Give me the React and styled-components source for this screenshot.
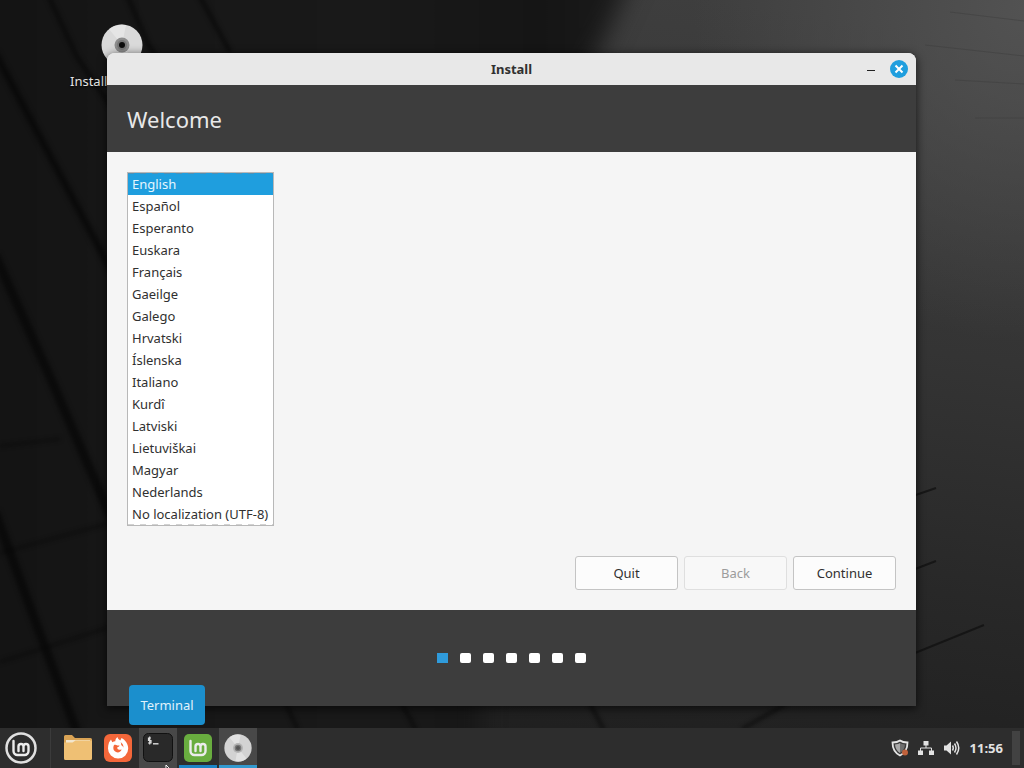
import React from "react";
import styled, { createGlobalStyle, css } from "styled-components";

const accent = "#1f9ede";

const GlobalStyle = createGlobalStyle`
  *, *::before, *::after { box-sizing: border-box; }
  body {
    margin: 0;
    background: #151515;
    font-family: "Noto Sans", "Liberation Sans", sans-serif;
    font-size: 13px;
    line-height: 18px;
    color: #303030;
  }
  button, select { font: inherit; }
`;

const Desktop = styled.div`
  position: relative;
  display: flex;
  flex-direction: column;
  min-height: 100vh;
  overflow: hidden;
`;

const WallpaperArt = styled.svg`
  position: absolute;
  inset: 0;
  width: 100%;
  height: 100%;
`;

const Workspace = styled.main`
  position: relative;
  flex: 1;
  display: flex;
  padding: 53px 108px 22px 107px;
`;

const DesktopIcon = styled.button`
  position: absolute;
  left: 70px;
  top: 24px;
  display: flex;
  flex-direction: column;
  width: 104px;
  gap: 6px;
  padding: 0;
  border: 0;
  background: none;
  color: #e4e4e4;
  text-align: left;
  text-shadow: 0 1px 2px #000;

  svg { align-self: center; }
`;

const Window = styled.section`
  position: relative;
  flex: 1;
  display: flex;
  flex-direction: column;
  border-radius: 8px 8px 0 0;
  overflow: hidden;
  background: #f5f5f5;
  box-shadow: 0 2px 8px 1px rgba(0, 0, 0, 0.6);
`;

const TitleBar = styled.header`
  display: grid;
  grid-template-columns: 1fr auto 1fr;
  align-items: center;
  height: 32px;
  padding: 0 8px;
  background: #e8e8e8;
`;

const WindowTitle = styled.h1`
  grid-column: 2;
  margin: 0;
  font-size: 13px;
  font-weight: 700;
`;

const WindowControls = styled.div`
  justify-self: end;
  display: flex;
  gap: 10px;
`;

const WindowControl = styled.button`
  display: grid;
  place-items: center;
  width: 18px;
  height: 18px;
  padding: 0;
  border: 0;
  border-radius: 50%;
  background: ${(p) => (p.$close ? accent : "transparent")};
  color: ${(p) => (p.$close ? "#fff" : "#222")};
`;

const PageHeader = styled.div`
  display: flex;
  align-items: center;
  height: 67px;
  padding: 0 20px;
  background: #3d3d3d;
  color: #e8e8e8;
`;

const PageTitle = styled.h2`
  margin: 0;
  font-size: 22px;
  line-height: 30px;
  font-weight: 400;
`;

const PageBody = styled.form`
  flex: 1;
  display: flex;
  flex-direction: column;
  justify-content: space-between;
  align-items: flex-start;
  gap: 20px;
  padding: 20px;
`;

const LanguageList = styled.select`
  width: 147px;
  height: 354px;
  padding: 0;
  border: 1px solid #b8b8b8;
  border-radius: 0;
  background: #fff;
  color: #303030;
  overflow: hidden;
  outline: none;
`;

const Language = styled.option`
  height: 22px;
  min-height: 22px;
  padding: 2px 4px 0;

  &:checked {
    background: repeating-linear-gradient(90deg, #4d8fb5 0 6px, ${accent} 6px 12px) top / 100% 1px no-repeat,
      linear-gradient(${accent}, ${accent});
    -webkit-text-fill-color: #e6f7ff;
  }

  &:last-child {
    background: repeating-linear-gradient(90deg, #d2d2d2 0 6px, #fff 6px 12px) bottom / 100% 1px no-repeat;
  }
`;

const Actions = styled.div`
  align-self: flex-end;
  display: flex;
  gap: 6px;
`;

const ActionButton = styled.button`
  width: 103px;
  height: 34px;
  padding: 0;
  border: 1px solid #c4c4c4;
  border-radius: 3px;
  background: #fcfcfc;
  color: #303030;

  &:disabled {
    border-color: #dfdfdf;
    background: #f8f8f8;
    color: #9c9c9c;
  }
`;

const Progress = styled.ol`
  display: flex;
  justify-content: center;
  align-items: center;
  gap: 12px;
  height: 96px;
  margin: 0;
  padding: 0;
  list-style: none;
  background: #3d3d3d;
`;

const Step = styled.li`
  width: 11px;
  height: 10px;
  border-radius: ${(p) => (p.$current ? 0 : 2)}px;
  background: ${(p) => (p.$current ? "#2f9bdb" : "#fff")};
`;

const Panel = styled.footer`
  position: relative;
  display: flex;
  align-items: center;
  height: 40px;
  padding-right: 4px;
  background: #2d2d2d;
`;

const MenuButton = styled.button`
  display: grid;
  place-items: center;
  width: 51px;
  height: 40px;
  padding: 0 8px 0 0;
  border: 0;
  border-right: 1px solid #3b3b3b;
  background: none;
`;

const TaskList = styled.nav`
  flex: 1;
  display: flex;
  gap: 2px;
  padding-left: 8px;
`;

const TaskButton = styled.button`
  position: relative;
  display: grid;
  place-items: center;
  width: 38px;
  height: 40px;
  padding: 0;
  border: 0;
  background: ${(p) => (p.$lit ? "#484848" : "transparent")};
  ${(p) =>
    p.$running &&
    css`
      box-shadow: inset 0 -3px ${p.$lit ? "#3399cf" : "#1c84c6"};
    `}
`;

const Tooltip = styled.span`
  position: absolute;
  left: -10px;
  bottom: 43px;
  width: 76px;
  padding: 11px 0;
  border-radius: 4px;
  background: #1b8fcd;
  color: #e0f2fc;
  text-align: center;
`;

const Pointer = styled.svg`
  position: absolute;
  left: 26px;
  top: 36px;
`;

const Tray = styled.div`
  display: flex;
  align-items: center;
  gap: 9px;
  color: #e2e2e2;
`;

const Clock = styled.time`
  font-weight: 700;
`;

const ShowDesktop = styled.button`
  width: 8px;
  height: 34px;
  padding: 0;
  border: 0;
  background: #424242;
`;

function Wallpaper() {
  return (
    <WallpaperArt viewBox="0 0 1024 768" preserveAspectRatio="none" aria-hidden="true">
      <defs>
        <linearGradient id="right" x1="0.7" y1="0" x2="0.5" y2="1">
          <stop offset="0" stopColor="#3e3e3e" />
          <stop offset="0.4" stopColor="#343434" />
          <stop offset="0.7" stopColor="#282828" />
          <stop offset="1" stopColor="#1e1e1e" />
        </linearGradient>
        <radialGradient id="glow" cx="1024" cy="10" r="330" gradientUnits="userSpaceOnUse">
          <stop offset="0" stopColor="#525252" />
          <stop offset="1" stopColor="#525252" stopOpacity="0" />
        </radialGradient>
        <linearGradient id="shade" x1="0" x2="1" y1="0" y2="0">
          <stop offset="0" stopColor="#131313" />
          <stop offset="0.3" stopColor="#171717" />
          <stop offset="0.6" stopColor="#191919" />
          <stop offset="0.86" stopColor="#151515" />
          <stop offset="1" stopColor="#1c1c1c" />
        </linearGradient>
        <filter id="soft" x="-5%" y="-5%" width="110%" height="110%" colorInterpolationFilters="sRGB">
          <feGaussianBlur stdDeviation="2" />
        </filter>
        <filter id="softer" x="-10%" y="-10%" width="120%" height="120%" colorInterpolationFilters="sRGB">
          <feGaussianBlur stdDeviation="12" />
        </filter>
      </defs>
      <rect width="1024" height="768" fill="url(#right)" />
      <rect width="1024" height="768" fill="url(#glow)" />
      <path d="M-40-40H640L590 70 480 300V808H-40Z" fill="url(#shade)" filter="url(#softer)" />
      <g fill="none" stroke="#070707" strokeOpacity="0.8" filter="url(#soft)">
        <path strokeWidth="4" d="M48 -5 77 57 112 108M127 -5 148 44 165 70M199 -5 230 52" />
        <path strokeWidth="7" d="M-5 53 50 156 112 272" />
        <path strokeWidth="9" d="M-5 255 50 377 112 520M-5 512 43 642 78 735" />
        <path strokeWidth="2" d="M0 553 110 523M0 662 110 627M0 446 60 439" />
        <path strokeWidth="3" d="M284 700 298 730M400 700 416 730M588 700 604 730M742 729 786 704" />
      </g>
      <path
        d="M910 497 936 488M910 571 936 561M910 655 984 625"
        fill="none"
        stroke="#111"
        strokeWidth="2"
        strokeOpacity="0.8"
      />
      <path
        d="M950 12 1024 21M925 45 1024 56M955 80 1024 84M975 118H1024"
        fill="none"
        stroke="#3a3a3a"
        strokeOpacity="0.4"
      />
    </WallpaperArt>
  );
}

function Disc({ size, dark }) {
  return (
    <svg width={size} height={size} viewBox="0 0 42 42" aria-hidden="true">
      <circle cx="21" cy="21" r="20.500" fill={dark ? "#d3d3d3" : "#dadada"} />
      <path d="M21 21 8 5A20.500 20.500 0 0 1 25 1ZM21 21 34 37A20.500 20.500 0 0 1 17 41Z" fill="#ececec" opacity="0.6" />
      <circle cx="21" cy="21" r="7.500" fill={dark ? "#b4b4b4" : "#8d8d8d"} />
      <circle cx="21" cy="21" r="5" fill="#777" />
      <circle cx="21" cy="21" r="3" fill={dark ? "#555" : "#0c0c0c"} />
    </svg>
  );
}

function MintMark({ x = 0, y = 0 }) {
  return (
    <path
      transform={`translate(${x} ${y})`}
      d="M1 0V10a4 4 0 0 0 4 4H12a4 4 0 0 0 4-4V5.500a2.500 2.500 0 0 0-5 0V10M11 5.500a2.500 2.500 0 0 0-5 0V10"
      fill="none"
      stroke="#ececec"
      strokeWidth="2.400"
      strokeLinecap="round"
      strokeLinejoin="round"
    />
  );
}

function MenuIcon() {
  return (
    <svg width="32" height="32" viewBox="0 0 32 32" aria-hidden="true">
      <circle cx="16" cy="16" r="14.500" fill="none" stroke="#e0e0e0" strokeWidth="2.500" />
      <MintMark x={7.5} y={9} />
    </svg>
  );
}

function FolderIcon() {
  return (
    <svg width="30" height="30" viewBox="0 0 30 30" aria-hidden="true">
      <path d="M1 3.500a1.500 1.500 0 0 1 1.500-1.500H9l3 3H27.500A1.500 1.500 0 0 1 29 6.500V14H1Z" fill="#d9a355" />
      <path d="M3 7H27V12H3Z" fill="#f3e6cd" />
      <path d="M1 9.500H9.500l3-2H29V25.500a1.500 1.500 0 0 1-1.500 1.500H2.500A1.500 1.500 0 0 1 1 25.500Z" fill="#efc074" />
    </svg>
  );
}

function FirefoxIcon() {
  return (
    <svg width="30" height="30" viewBox="0 0 30 30" aria-hidden="true">
      <rect x="1" y="1" width="28" height="28" rx="6" fill="#f4673a" />
      <path
        d="M6 9.500 8 6.500l1.300 2.800c1-.8 2-1 3-1 0-1.800.7-3.200 2.200-4.300.2 1.800 1.400 2.700 2.800 3.500L18.500 5c3.800 2 6.700 6 6.700 10.500A10 10 0 0 1 15 25.500 10 10 0 0 1 5 15.500c0-2.200.3-4 1-6Z"
        fill="#fff"
      />
      <path
        d="M11 12c1.300-.6 2.400-.2 3.200.6h2.300c-.2 1-1.200 1.500-2.300 1.900 0 1.500 1 2.200 2 2.200s1.600-.4 2.400-.2c-.5 1.700-2 2.900-3.900 2.900a4.400 4.400 0 0 1-4.400-4.400c0-1.100.2-2.100.7-3Z"
        fill="#f4673a"
      />
      <path d="M17.500 9c2.200 1.500 3.100 3.200 2.900 5.800-.5-1.400-1.300-2.200-2.300-2.700.3-1 0-2.100-.6-3.100Z" fill="#f4673a" />
    </svg>
  );
}

function TerminalIcon() {
  return (
    <svg width="32" height="32" viewBox="0 0 32 32" aria-hidden="true">
      <rect x="1.500" y="1.500" width="29" height="28" rx="5" fill="#292929" stroke="#111" />
      <path d="M9 6H6.500V8.500H9V11H6M7.700 4.500V12.500" fill="none" stroke="#ddd" strokeWidth="1.200" />
      <path d="M11 11.800H16.500" stroke="#ddd" strokeWidth="1.400" />
    </svg>
  );
}

function WelcomeIcon() {
  return (
    <svg width="30" height="30" viewBox="0 0 30 30" aria-hidden="true">
      <rect x="1" y="1" width="28" height="28" rx="5" fill="#69ad3f" />
      <MintMark x={6.5} y={8} />
    </svg>
  );
}

function ShieldIcon() {
  return (
    <svg width="18" height="18" viewBox="0 0 18 18" aria-hidden="true">
      <path d="M9 1.500C11 3 13.500 3.500 16.500 3.500 16.500 9.500 14 14 9 16.500 4 14 1.500 9.500 1.500 3.500 4.500 3.500 7 3 9 1.500Z" fill="#3b3b3b" stroke="#e4e4e4" strokeWidth="1.800" />
      <path d="M9 4C7.500 5 6 5.300 4 5.500 4.300 9.500 6 12 9 14Z" fill="#a9a9a9" />
      <path d="M9 4C10.500 5 12 5.300 14 5.500 13.700 9.500 12 12 9 14Z" fill="#6d6d6d" />
      <circle cx="14" cy="13.500" r="3" fill="#c0623c" />
    </svg>
  );
}

function NetworkIcon() {
  return (
    <svg width="16" height="16" viewBox="0 0 16 16" aria-hidden="true">
      <path d="M5.500 1H10.500V5.500H5.500ZM0 10.500H5V15H0ZM11 10.500H16V15H11Z" fill="currentColor" />
      <path d="M8 5V8M2.500 11V8H13.500V11" fill="none" stroke="currentColor" />
    </svg>
  );
}

function VolumeIcon() {
  return (
    <svg width="18" height="16" viewBox="0 0 18 16" aria-hidden="true">
      <path d="M1 5.500H3.500L8 1.500V14.500L3.500 10.500H1Z" fill="currentColor" />
      <path d="M9.500 5.500Q11 8 9.500 10.500M11.500 3.500Q14.500 8 11.500 12.500M13.500 1.500Q18 8 13.500 14.500" fill="none" stroke="currentColor" strokeWidth="1.500" />
    </svg>
  );
}

const languages = [
  "English", "Español", "Esperanto", "Euskara", "Français", "Gaeilge", "Galego", "Hrvatski",
  "Íslenska", "Italiano", "Kurdî", "Latviski", "Lietuviškai", "Magyar", "Nederlands",
  "No localization (UTF-8)",
];

const steps = [1, 2, 3, 4, 5, 6, 7];

export default function App() {
  return (
    <Desktop>
      <GlobalStyle />
      <Wallpaper />
      <Workspace>
        <DesktopIcon type="button">
          <Disc size={42} />
          Install
        </DesktopIcon>
        <Window>
          <TitleBar>
            <WindowTitle>Install</WindowTitle>
            <WindowControls>
              <WindowControl type="button" aria-label="Minimize">
                <svg width="18" height="18" viewBox="0 0 18 18">
                  <path d="M5 10.500H13" stroke="currentColor" />
                </svg>
              </WindowControl>
              <WindowControl type="button" aria-label="Close" $close>
                <svg width="18" height="18" viewBox="0 0 18 18">
                  <path d="M5.500 5.500 12.500 12.500M12.500 5.500 5.500 12.500" stroke="currentColor" strokeWidth="2" />
                </svg>
              </WindowControl>
            </WindowControls>
          </TitleBar>
          <PageHeader>
            <PageTitle>Welcome</PageTitle>
          </PageHeader>
          <PageBody onSubmit={(e) => e.preventDefault()}>
            <LanguageList size={16} defaultValue="English" aria-label="Language">
              {languages.map((name) => (
                <Language key={name} value={name}>{name}</Language>
              ))}
            </LanguageList>
            <Actions>
              <ActionButton type="button">Quit</ActionButton>
              <ActionButton type="button" disabled>Back</ActionButton>
              <ActionButton type="submit">Continue</ActionButton>
            </Actions>
          </PageBody>
          <Progress aria-label="Progress">
            {steps.map((n) => (
              <Step key={n} $current={n === 1} />
            ))}
          </Progress>
        </Window>
      </Workspace>
      <Panel>
        <MenuButton type="button" aria-label="Menu"><MenuIcon /></MenuButton>
        <TaskList>
          <TaskButton type="button" aria-label="Files"><FolderIcon /></TaskButton>
          <TaskButton type="button" aria-label="Firefox"><FirefoxIcon /></TaskButton>
          <TaskButton type="button" $lit>
            <TerminalIcon />
            <Tooltip role="tooltip">Terminal</Tooltip>
            <Pointer width="12" height="18" viewBox="0 0 12 18" aria-hidden="true">
              <path d="M1 1V14L4 11 6.500 16.500 8.500 15.500 6 10.500H10Z" fill="#111" stroke="#fff" />
            </Pointer>
          </TaskButton>
          <TaskButton type="button" aria-label="Welcome screen" $running><WelcomeIcon /></TaskButton>
          <TaskButton type="button" aria-label="Installer" $running $lit><Disc size={28} dark /></TaskButton>
        </TaskList>
        <Tray>
          <ShieldIcon />
          <NetworkIcon />
          <VolumeIcon />
          <Clock>11:56</Clock>
          <ShowDesktop type="button" aria-label="Show desktop" />
        </Tray>
      </Panel>
    </Desktop>
  );
}
